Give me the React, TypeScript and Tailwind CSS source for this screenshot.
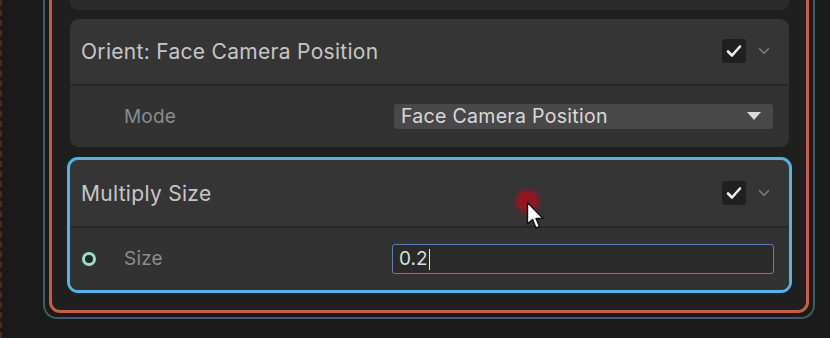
import { ChevronDown } from "lucide-react";

const font = { fontFamily: "Inter, 'Noto Sans', sans-serif" };

function Check() {
  return (
    <div className="flex h-[24px] w-[24px] items-center justify-center rounded-[3px] bg-[#202020]">
      <svg width="16" height="14" viewBox="0 0 16 14" fill="none">
        <path d="M2 7.5 L6 11.5 L14 2.5" stroke="#ededed" strokeWidth="2.6" strokeLinecap="round" strokeLinejoin="round" />
      </svg>
    </div>
  );
}

function HeaderRow({ title, h }: { title: string; h: string }) {
  return (
    <div className={`flex items-center pl-[11px] pr-[16px] ${h}`}>
      <span className="flex-1 text-[21px] tracking-[0.3px] text-[#c6c6c6]">{title}</span>
      <Check />
      <ChevronDown size={18} strokeWidth={2.2} className="ml-[9px] text-[#7a7a7a]" />
    </div>
  );
}

export default function App() {
  return (
    <div className="relative flex h-[338px] w-[830px] overflow-hidden bg-[#1b1a1a]" style={font}>
      {/* faint dashed strip on the left edge */}
      <div className="h-full w-[2px] border-l-2 border-dashed border-[#4a2c1e]" />

      {/* outer teal frame */}
      <div className="ml-[41px] flex h-[319px] w-[772px] rounded-b-[14px] border-2 border-t-0 border-[#3f5b63] px-[4px] pb-[4px]">
        {/* orange frame */}
        <div className="flex flex-1 flex-col rounded-b-[11px] border-[3px] border-t-0 border-[#c6603c] bg-[#1f1f1f] pb-[17px] pl-[15px] pr-[14px]">
          {/* bottom of previous card */}
          <div className="mx-[3px] h-[10px] rounded-b-[8px] bg-[#2b2b2b]" />

          {/* Orient card */}
          <div className="mx-[3px] mt-[9px] overflow-hidden rounded-[9px] bg-[#353535]">
            <HeaderRow title="Orient: Face Camera Position" h="h-[65px]" />
            <div className="h-[2px] bg-[#272727]" />
            <div className="flex h-[62px] items-center bg-[#323232] pl-[54px] pr-[16px]">
              <span className="flex-1 text-[19px] tracking-[0.2px] text-[#8c8c8c]">Mode</span>
              <div className="flex h-[25px] w-[379px] items-center rounded-[3px] bg-[#484848] pl-[7px] pr-[12px]">
                <span className="flex-1 text-[19.5px] tracking-[0.3px] text-[#dadada]">Face Camera Position</span>
                <svg width="14" height="9" viewBox="0 0 14 9">
                  <path d="M0 0 H14 L7 8 Z" fill="#dcdcdc" />
                </svg>
              </div>
            </div>
          </div>

          {/* Multiply Size card (selected) */}
          <div className="mt-[10px] overflow-hidden rounded-[11px] border-[3px] border-[#55b2e6] bg-[#353535]">
            <HeaderRow title="Multiply Size" h="h-[66px]" />
            <div className="h-[2px] bg-[#272727]" />
            <div className="flex h-[62px] items-center bg-[#323232] pl-[12px] pr-[15px]">
              <div className="h-[14px] w-[14px] rounded-full border-[3px] border-[#a3dac6] bg-[#1e2c28]" />
              <span className="ml-[28px] flex-1 text-[19px] tracking-[0.2px] text-[#8c8c8c]">Size</span>
              <div className="flex h-[30px] w-[382px] items-center rounded-[3px] border-[1.5px] border-[#5b82b6] bg-[#2a2a2a] pl-[6px]">
                <span className="text-[19px] text-[#dedede]">0.2</span>
                <span className="ml-[1px] h-[21px] w-[1.5px] bg-[#e6e6e6]" />
              </div>
            </div>
          </div>
        </div>
      </div>

      {/* screen-recording cursor overlay */}
      <div className="absolute left-[516px] top-[190px] h-[23px] w-[23px] rounded-full bg-[#a81020] opacity-85 blur-[2px]" />
      <svg className="absolute left-[526px] top-[201px]" width="20" height="30" viewBox="0 0 20 30">
        <path d="M1.5 1.5 L1.5 23 L6.5 18.5 L10 27 L13.5 25.5 L10 17.5 L17 17.5 Z" fill="#ffffff" stroke="#111111" strokeWidth="1.4" strokeLinejoin="round" />
      </svg>
    </div>
  );
}
